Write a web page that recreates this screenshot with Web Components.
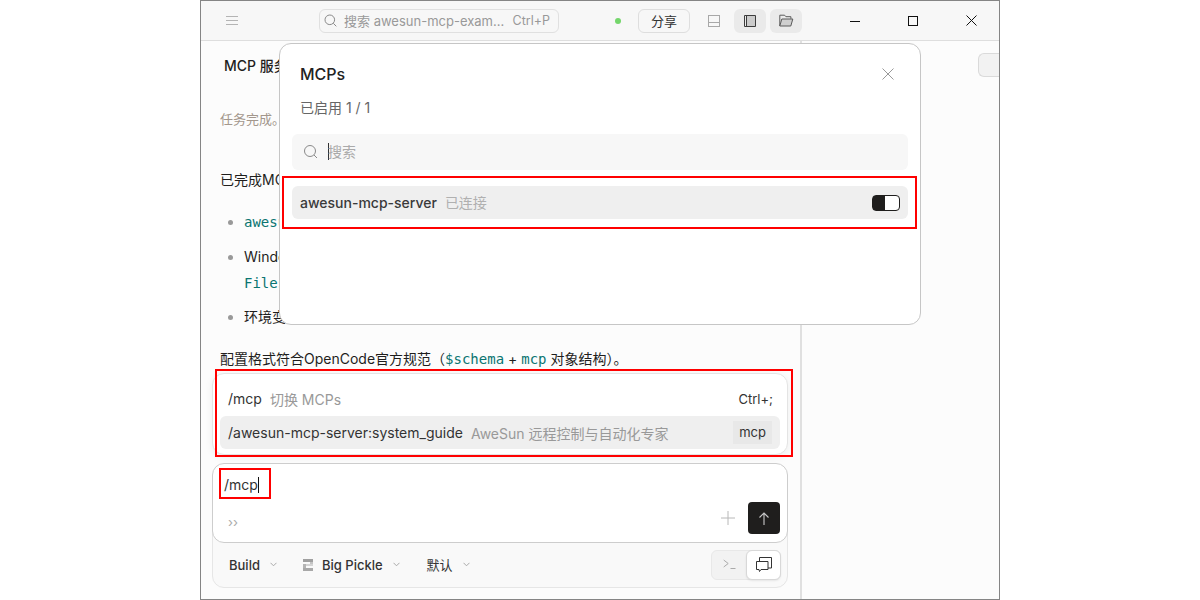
<!DOCTYPE html>
<html lang="zh-CN">
<head>
  <meta charset="UTF-8">
  <title>OpenCode MCPs</title>
  <style>
    html, body { margin: 0; height: 100%; background: #fff; }
    body { display: flex; justify-content: center; font-family: Inter, "Noto Sans CJK SC", sans-serif; }
  </style>
  <script type="module">
    const mono = `"DejaVu Sans Mono", "Noto Sans CJK SC", monospace`;
    const chevron = `<svg class="c" width="7" height="5" viewBox="0 0 7 5" fill="none" stroke="#aaa"><path d="M.5.8L3.500 3.800 6.500.8"/></svg>`;

    class AppWindow extends HTMLElement {
      constructor() {
        super();
        this.attachShadow({ mode: 'open' });
        this.shadowRoot.innerHTML = `
          <style>
            :host {
              display: flex;
              flex-direction: column;
              position: relative;
              width: 800px;
              height: 600px;
              box-sizing: border-box;
              border: 1px solid #858585;
              background: #fcfcfc;
              overflow: hidden;
              color: #1f1e1d;
              font-size: 14px;
            }
            main { flex: 1; display: flex; min-height: 0; }
            #left { width: 599px; display: flex; flex-direction: column; min-height: 0; }
            #gutter { width: 2px; background: #e0e0e0; }
            #side { flex: 1; padding-top: 12px; display: flex; justify-content: flex-end; }
            #tab { width: 21px; height: 24px; box-sizing: border-box; border: 1px solid #dadada; border-right: 0; border-radius: 6px 0 0 6px; background: #f2f2f2; }
            .mark { position: absolute; z-index: 2; box-sizing: border-box; border: 2px solid #f00; }
          </style>
          <slot name="bar"></slot>
          <main>
            <div id="left"><slot></slot></div>
            <div id="gutter"></div>
            <div id="side"><div id="tab"></div></div>
          </main>
          <slot name="dialog"></slot>
          <div class="mark" style="left:81px;top:175px;width:635px;height:53px"></div>
          <div class="mark" style="left:14px;top:368px;width:578px;height:88px"></div>
          <div class="mark" style="left:18px;top:467px;width:52px;height:31px"></div>
        `;
      }
    }

    class TitleBar extends HTMLElement {
      constructor() {
        super();
        this.attachShadow({ mode: 'open' });
        this.shadowRoot.innerHTML = `
          <style>
            :host {
              display: flex;
              align-items: center;
              height: 39px;
              flex: none;
              background: #f7f7f7;
              border-bottom: 1px solid #dedede;
              box-sizing: content-box;
            }
            svg { display: block; flex: none; }
            #menu { margin-left: 25px; }
            #search {
              margin-left: 81px;
              width: 240px;
              height: 24px;
              box-sizing: border-box;
              border: 1px solid #e0e0e0;
              border-radius: 6px;
              display: flex;
              align-items: center;
              padding: 0 8px 0 4px;
              color: #999;
              font-size: 13px;
              white-space: nowrap;
            }
            #search span { margin-left: 7px; flex: 1; }
            #search b { font-weight: 400; font-size: 12.500px; }
            #dot { margin-left: 56px; width: 6px; height: 6px; border-radius: 50%; background: #74d66b; }
            #share {
              margin-left: 17px;
              width: 52px;
              height: 24px;
              box-sizing: border-box;
              border: 1px solid #dedede;
              border-radius: 6px;
              display: flex;
              align-items: center;
              justify-content: center;
              font-size: 13px;
              color: #333;
            }
            .tool { width: 32px; height: 24px; display: flex; align-items: center; justify-content: center; border-radius: 6px; }
            .tool.on { background: #eaeaea; }
            #panel { margin-left: 8px; }
            #side { margin-left: 4px; }
            #folder { margin-left: 4px; }
            #min, #max, #close { margin-left: 48px; }
          </style>
          <svg id="menu" width="12" height="10" viewBox="0 0 12 10"><path d="M0 .5h12M0 4.500h12M0 8.500h12" stroke="#b4b4b4" stroke-width="1.200"/></svg>
          <div id="search">
            <svg width="13" height="13" viewBox="0 0 13 13" fill="none" stroke="#8a8a8a"><circle cx="5.800" cy="5.800" r="4.800"/><path d="M9.300 9.300l3 3"/></svg>
            <span>搜索 awesun-mcp-exam...</span><b>Ctrl+P</b>
          </div>
          <div id="dot"></div>
          <div id="share">分享</div>
          <div class="tool" id="panel"><svg width="12" height="12" viewBox="0 0 12 12" fill="none" stroke="#a8a8a8"><rect x=".5" y=".5" width="11" height="11"/><path d="M.5 7.500h11"/></svg></div>
          <div class="tool on" id="side"><svg width="12" height="12" viewBox="0 0 12 12"><rect x="3" y="1" width="8" height="10" fill="#cbcbcb"/><path d="M.5.5h11v11H.5zM2.500 .5v11" fill="none" stroke="#3c3c3c"/></svg></div>
          <div class="tool on" id="folder"><svg width="15" height="13" viewBox="0 0 15 13" fill="none" stroke="#5a5a5a"><path d="M.8 12V1.200h4.800l1.300 1.500h5v2"/><path d="M.8 12l2-7h11l-2 7z" fill="#cfcfcf"/></svg></div>
          <svg id="min" width="10" height="10" viewBox="0 0 10 10"><path d="M0 5.500h10" stroke="#111"/></svg>
          <svg id="max" width="10" height="10" viewBox="0 0 10 10"><rect x=".5" y=".5" width="9" height="9" fill="none" stroke="#111"/></svg>
          <svg id="close" width="11" height="11" viewBox="0 0 11 11"><path d="M.5.5l10 10M10.500.5l-10 10" stroke="#111"/></svg>
        `;
      }
    }

    class ThreadView extends HTMLElement {
      constructor() {
        super();
        this.attachShadow({ mode: 'open' });
        this.shadowRoot.innerHTML = `
          <style>
            :host { display: block; flex: 1; min-height: 0; overflow: hidden; padding: 16px 0 0 19px; line-height: 18px; white-space: nowrap; }
            h2 { margin: 0 0 0 4px; font: 500 14px/18px Inter, "Noto Sans CJK SC", sans-serif; }
            p { margin: 0; }
            #done { margin-top: 35px; color: #a3978c; font-size: 13px; }
            #summary { margin-top: 43px; }
            ul { margin: 20px 0 0; padding: 0 0 0 24px; line-height: 26px; }
            li { margin-bottom: 8.500px; }
            li::marker { color: #999; }
            code { font-family: ${mono}; font-size: 14px; color: #0a7571; }
            #format { margin-top: 16px; line-height: 26px; }
          </style>
          <h2>MCP 服务</h2>
          <p id="done">任务完成。</p>
          <p id="summary">已完成MCP</p>
          <ul>
            <li><code>awesun</code></li>
            <li>Windows<br><code>Files</code></li>
            <li>环境变量</li>
          </ul>
          <p id="format">配置格式符合OpenCode官方规范（<code>$schema</code> + <code>mcp</code> 对象结构）。</p>
        `;
      }
    }

    class PromptBox extends HTMLElement {
      constructor() {
        super();
        this.attachShadow({ mode: 'open' });
        this.shadowRoot.innerHTML = `
          <style>
            :host { display: block; position: relative; flex: none; margin: 0 12px 11px 11px; height: 125px; }
            svg { display: block; flex: none; }
            #popup {
              position: absolute;
              left: 0; right: 0; bottom: 133px;
              height: 82px;
              box-sizing: border-box;
              padding: 8px 7px 6px;
              background: #fff;
              border: 1px solid #e4e4e4;
              border-radius: 12px;
              box-shadow: 0 2px 8px rgba(0,0,0,.06);
              display: flex;
              flex-direction: column;
              gap: 1px;
            }
            .row { height: 33px; flex: none; display: flex; align-items: center; padding: 0 8px; border-radius: 6px; white-space: nowrap; color: #333; }
            .row.on { background: #efefef; }
            .row i { font-style: normal; color: #999; margin-left: 8px; flex: 1; }
            .row kbd { font: 13px Inter, sans-serif; color: #333; margin-right: -1px; }
            .row em { font-style: normal; font-size: 13px; background: #e8e8e8; padding: 0 6px; height: 23px; line-height: 23px; color: #333; }
            #input {
              position: relative;
              z-index: 1;
              height: 80px;
              box-sizing: border-box;
              background: #fff;
              border: 1px solid #cdcdcd;
              border-radius: 12px;
            }
            #text { position: absolute; left: 11px; top: 12px; line-height: 18px; color: #333; display: flex; }
            #text u { width: 1px; height: 16px; margin-top: 1px; background: #111; }
            #more { position: absolute; left: 15px; top: 52px; color: #aaa; font-size: 13px; line-height: 12px; }
            #plus { position: absolute; right: 52px; top: 47px; }
            #send { position: absolute; right: 7px; top: 38px; width: 32px; height: 32px; border-radius: 4px; background: #1f1e1d; display: flex; align-items: center; justify-content: center; }
            #tray {
              position: absolute;
              left: 0; right: 0; bottom: 0;
              height: 72px;
              box-sizing: border-box;
              padding-top: 25px;
              background: #f9f9f9;
              border: 1px solid #e6e6e6;
              border-radius: 12px;
              display: flex;
              align-items: center;
              font-size: 13px;
              color: #333;
            }
            #tray span { display: flex; align-items: center; font-weight: 500; }
            #tray span svg.c { margin-left: 10px; }
            #build { margin-left: 16px; }
            #pickle { margin-left: 26px; }
            #pickle svg:first-child { margin-right: 9px; }
            #mode { margin-left: 27px; font-weight: 400 !important; }
            #seg { margin-left: auto; margin-right: 6px; width: 70px; height: 30px; box-sizing: border-box; border: 1px solid #e8e8e8; border-radius: 6px; background: #f2f2f2; display: flex; }
            #seg div { flex: 1; display: flex; align-items: center; justify-content: center; }
            #seg div + div { flex: none; width: 33px; margin: -1px; background: #fff; border: 1px solid #d8d8d8; border-radius: 6px; box-shadow: 0 1px 2px rgba(0,0,0,.08); }
          </style>
          <div id="popup">
            <div class="row">/mcp<i>切换 MCPs</i><kbd>Ctrl+;</kbd></div>
            <div class="row on">/awesun-mcp-server:system_guide<i>AweSun 远程控制与自动化专家</i><em>mcp</em></div>
          </div>
          <div id="tray">
            <span id="build">Build${chevron}</span>
            <span id="pickle"><svg width="10" height="12" viewBox="0 0 10 12"><path d="M0 0h10v3H0z" fill="#a0a0a0"/><path d="M7 3h3v2.500H7z" fill="#c4c4c4"/><path d="M3 5h7v2H3z" fill="#d4d4d4"/><path d="M0 5h3v4H0z" fill="#b4b4b4"/><path d="M0 9h10v3H0z" fill="#a8a8a8"/></svg>Big Pickle${chevron}</span>
            <span id="mode">默认${chevron}</span>
            <div id="seg">
              <div><svg width="13" height="11" viewBox="0 0 13 11" fill="none" stroke="#aaa"><path d="M.7 1l4.500 3.500L.7 8M7.500 9.500h5"/></svg></div>
              <div><svg width="16" height="15" viewBox="0 0 16 15" fill="none" stroke="#333"><path d="M.5 4.500h11.500v8H5L3.500 14.500 3 12.500H.5z"/><path d="M3.500 4.500V.5h12v10.500H12"/></svg></div>
            </div>
          </div>
          <div id="input">
            <div id="text">/mcp<u></u></div>
            <div id="more">››</div>
            <svg id="plus" width="14" height="14" viewBox="0 0 14 14"><path d="M7 0v14M0 7h14" stroke="#b8b8b8"/></svg>
            <div id="send"><svg width="12" height="13" viewBox="0 0 12 13" fill="none" stroke="#c8c8c8" stroke-width="1.100"><path d="M6 13V1M1.500 5.500L6 1l4.500 4.500"/></svg></div>
          </div>
        `;
      }
    }

    class McpDialog extends HTMLElement {
      constructor() {
        super();
        this.attachShadow({ mode: 'open' });
        this.shadowRoot.innerHTML = `
          <style>
            :host {
              position: absolute;
              left: 78px; top: 42px;
              width: 642px; height: 282px;
              box-sizing: border-box;
              padding: 0 12px;
              background: #fff;
              border: 1px solid #c6c6c6;
              border-radius: 12px;
              display: flex;
              flex-direction: column;
              color: #333;
            }
            header { height: 60px; display: flex; align-items: center; justify-content: space-between; padding: 0 14px 0 8px; flex: none; }
            h1 { margin: 0; font: 500 16px/20px Inter, sans-serif; color: #222; }
            #count { margin: -5px 0 0 8px; line-height: 18px; color: #666; font-size: 14px; }
            #search { margin-top: 17px; height: 36px; box-sizing: border-box; padding: 0 0 2px 11px; flex: none; background: #f7f7f7; border-radius: 6px; display: flex; align-items: center; color: #aaa; }
            #search u { width: 1px; height: 17px; background: #333; margin: 0 -1px 0 10px; }
            #item { margin-top: 16px; height: 33px; box-sizing: border-box; padding: 0 8px 1px; flex: none; background: #efefef; border-radius: 6px; display: flex; align-items: center; }
            #item b { font-weight: 500; color: #3a3a3a; }
            #item i { font-style: normal; color: #b0b0b0; margin-left: 8px; flex: 1; }
            #toggle { width: 28px; height: 16px; margin-top: 1px; box-sizing: border-box; border: 1px solid #1f1e1d; border-radius: 4px; background: linear-gradient(90deg, #1f1e1d 45%, #fff 45%); }
            svg { display: block; flex: none; }
          </style>
          <header>
            <h1>MCPs</h1>
            <svg width="12" height="12" viewBox="0 0 12 12"><path d="M.5.5l11 11M11.500.5l-11 11" stroke="#999"/></svg>
          </header>
          <p id="count">已启用 1 / 1</p>
          <div id="search">
            <svg width="15" height="15" viewBox="0 0 15 15" fill="none" stroke="#8a8a8a"><circle cx="7" cy="7" r="5.500"/><path d="M11 11l3 3"/></svg>
            <u></u>搜索
          </div>
          <div id="item"><b>awesun-mcp-server</b><i>已连接</i><div id="toggle"></div></div>
        `;
      }
    }

    customElements.define('app-window', AppWindow);
    customElements.define('title-bar', TitleBar);
    customElements.define('thread-view', ThreadView);
    customElements.define('prompt-box', PromptBox);
    customElements.define('mcp-dialog', McpDialog);
  </script>
</head>
<body>
  <app-window>
    <title-bar slot="bar"></title-bar>
    <thread-view></thread-view>
    <prompt-box></prompt-box>
    <mcp-dialog slot="dialog"></mcp-dialog>
  </app-window>
</body>
</html>
